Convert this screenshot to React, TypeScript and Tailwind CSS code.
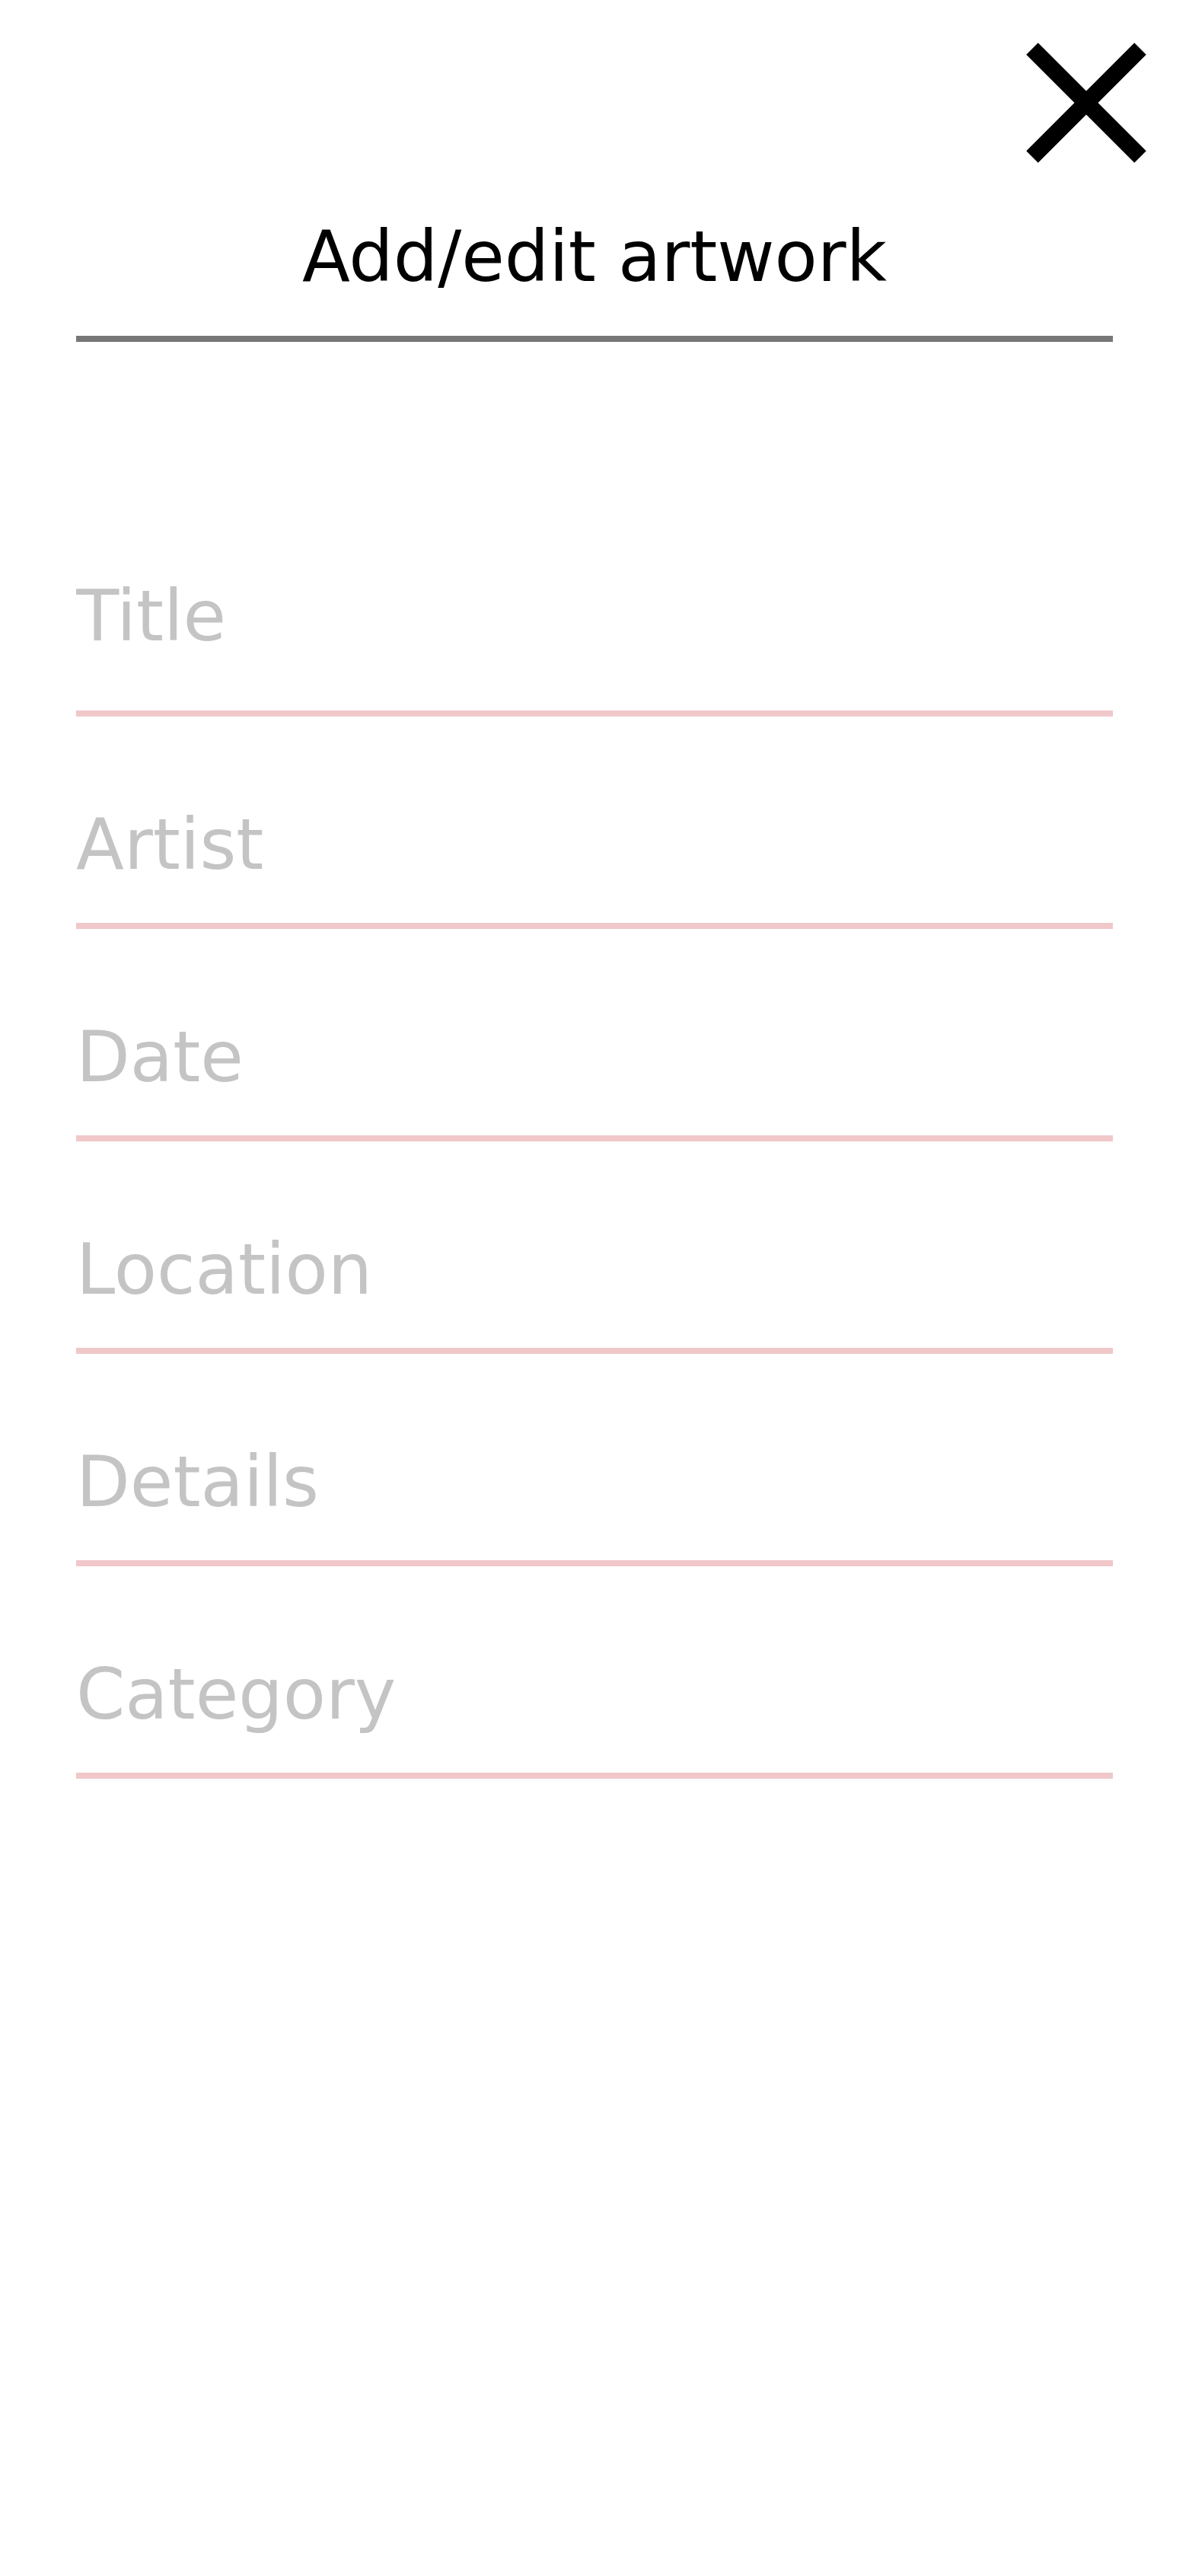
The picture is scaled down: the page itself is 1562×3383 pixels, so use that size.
import React from "react";

const fields = ["Title", "Artist", "Date", "Location", "Details", "Category"];

export default function App() {
  return (
    <div
      className="min-h-[3383px] w-full bg-white"
      style={{ fontFamily: '"DejaVu Sans", "Liberation Sans", sans-serif' }}
    >
      <div className="flex justify-end pt-[56px] pr-[56px]">
        <button aria-label="Close" className="block h-[158px] w-[158px]">
          <svg width="158" height="158" viewBox="0 0 158 158">
            <line x1="8" y1="8" x2="150" y2="150" stroke="#000" strokeWidth="22" />
            <line x1="150" y1="8" x2="8" y2="150" stroke="#000" strokeWidth="22" />
          </svg>
        </button>
      </div>
      <div className="mx-[100px]">
        <h1 className="mt-[78px] text-center text-[92px] leading-none font-normal text-black">
          Add/edit artwork
        </h1>
        <div className="mt-[57px] h-[8px] bg-[#777777]" />
        <form>
          {fields.map((f, i) => (
            <div
              key={f}
              className={
                i === 0
                  ? "mt-[301px] border-b-[8px] border-[#f0c8ca] pb-[63px]"
                  : "mt-[109px] border-b-[8px] border-[#f0c8ca] pb-[42px]"
              }
            >
              <input
                type="text"
                placeholder={f}
                className="block h-[120px] w-full bg-transparent p-0 text-[92px] leading-[120px] text-black outline-none placeholder:text-[#c4c4c4]"
                style={{ fontFamily: '"DejaVu Sans", "Liberation Sans", sans-serif' }}
              />
            </div>
          ))}
        </form>
      </div>
    </div>
  );
}
